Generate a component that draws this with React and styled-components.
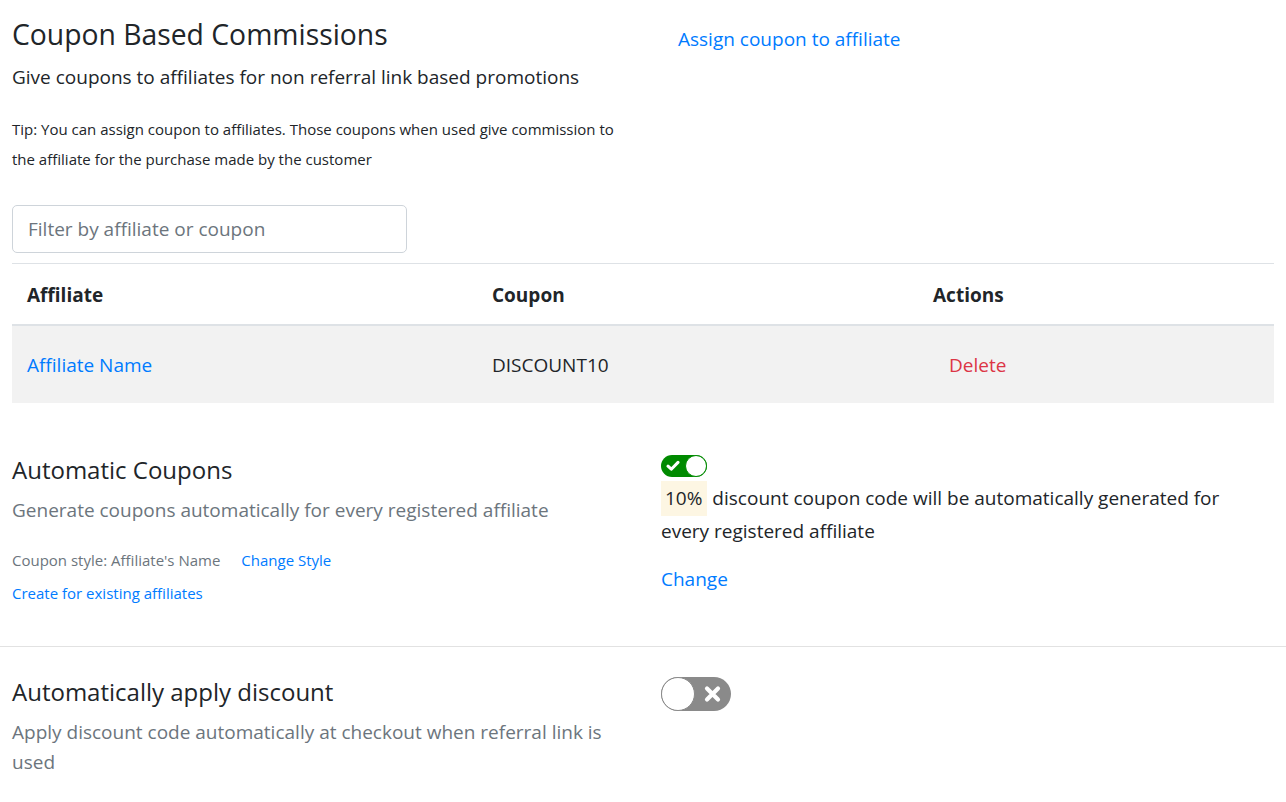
import React from 'react'
import styled, { createGlobalStyle } from 'styled-components'

const GlobalStyle = createGlobalStyle`
  body {
    margin: 0;
    background: #fff;
    color: #212529;
    font-family: "Open Sans", "Noto Sans", sans-serif;
  }
  * { box-sizing: border-box; }
`

const Page = styled.div`
  padding: 17px 12px 40px;
`

const Row = styled.div`
  display: grid;
  grid-template-columns: 619px 1fr;
  column-gap: 30px;
`

const Column = styled.div`
  display: flex;
  flex-direction: column;
  align-items: flex-start;
  padding-right: ${p => (p.right ? 12 : 0)}px;
`

const Title = styled.h3`
  margin: 0;
  font-size: 28.3px;
  font-weight: 400;
  line-height: 34px;
`

const Subtitle = styled.div`
  margin-top: 13px;
  font-size: 19px;
  line-height: 27px;
`

const Tip = styled.p`
  margin: 23px 0 0;
  font-size: 15px;
  line-height: 30px;
`

const Link = styled.a`
  color: #007bff;
  text-decoration: none;
  cursor: pointer;
  font-size: ${p => p.size || 19}px;
  line-height: ${p => p.lh || 27}px;
`

const AssignLink = styled(Link)`
  margin: 9px 0 0 17px;
`

const FilterInput = styled.input`
  margin-top: 31px;
  width: 395px;
  height: 48px;
  padding: 0 15px;
  border: 1px solid #ced4da;
  border-radius: 5px;
  font-family: inherit;
  font-size: 19px;
  color: #495057;
  outline: none;
  &::placeholder { color: #6c757d; }
`

const Table = styled.table`
  width: 100%;
  margin-top: 10px;
  border-collapse: collapse;
  border-top: 1px solid #dee2e6;
  font-size: 19px;
`

const Th = styled.th`
  width: ${p => p.w || 'auto'};
  text-align: left;
  font-weight: 700;
  height: 61px;
  padding: 2px 15px 0;
  border-bottom: 2px solid #dee2e6;
`

const BodyRow = styled.tr`
  background: #f2f2f2;
`

const Td = styled.td`
  height: 78px;
  padding: 2px 15px 0;
`

const DeleteButton = styled.a`
  margin-left: 16px;
  color: #dc3545;
  cursor: pointer;
`

const Section = styled(Row)`
  padding-top: ${p => p.pt}px;
  padding-bottom: ${p => p.pb}px;
`

const SectionTitle = styled.h4`
  margin: 0;
  font-size: 24px;
  font-weight: 400;
  line-height: 30px;
`

const Muted = styled.div`
  margin-top: ${p => p.mt || 0}px;
  color: #6c757d;
  font-size: ${p => p.size || 19}px;
  line-height: ${p => p.lh || 30}px;
`

const StyleLine = styled.div`
  display: flex;
  align-items: center;
  gap: 21px;
  margin-top: 25px;
`

const Divider = styled.hr`
  margin: 0 -12px;
  border: 0;
  border-top: 1px solid #e2e2e2;
`

const Track = styled.div`
  position: relative;
  width: ${p => p.w}px;
  height: ${p => p.h}px;
  border-radius: ${p => p.h / 2}px;
  background: ${p => (p.on ? '#008a00' : '#8a8a8a')};
  flex-shrink: 0;
`

const Knob = styled.div`
  position: absolute;
  top: 0;
  ${p => (p.on ? 'right: 0;' : 'left: 0;')}
  width: ${p => p.h}px;
  height: ${p => p.h}px;
  border-radius: 50%;
  background: #fff;
  border: 1px solid ${p => (p.on ? '#008a00' : '#8a8a8a')};
`

const ToggleIcon = styled.svg`
  position: absolute;
  top: 50%;
  transform: translateY(-50%);
  ${p => (p.on ? 'left: 5px;' : 'right: 10px;')}
`

function Toggle({ on, w, h }) {
  return (
    <Track on={on} w={w} h={h}>
      {on ? (
        <ToggleIcon on width="14" height="12" viewBox="0 0 14 12">
          <path d="M2 6.2 L5.3 9.2 L12 2.4" fill="none" stroke="#fff" strokeWidth="3" strokeLinecap="round" strokeLinejoin="round" />
        </ToggleIcon>
      ) : (
        <ToggleIcon width="17" height="17" viewBox="0 0 17 17">
          <path d="M3 3 L14 14 M14 3 L3 14" fill="none" stroke="#fff" strokeWidth="4.2" strokeLinecap="round" />
        </ToggleIcon>
      )}
      <Knob on={on} h={h} />
    </Track>
  )
}

const Description = styled.div`
  margin-top: 4px;
  font-size: 19px;
  line-height: 30px;
`

const Percent = styled.span`
  display: inline-block;
  background: #fdf6e3;
  padding: 2px 5px 3px 4px;
  line-height: 30px;
`

const ChangeLink = styled(Link)`
  margin-top: 20px;
`

const CreateLink = styled(Link)`
  margin-top: 12px;
`

export default function App() {
  return (
    <Page>
      <GlobalStyle />
      <Row>
        <Column>
          <Title>Coupon Based Commissions</Title>
          <Subtitle>Give coupons to affiliates for non referral link based promotions</Subtitle>
          <Tip>
            Tip: You can assign coupon to affiliates. Those coupons when used give commission to the
            affiliate for the purchase made by the customer
          </Tip>
        </Column>
        <Column right>
          <AssignLink>Assign coupon to affiliate</AssignLink>
        </Column>
      </Row>

      <FilterInput placeholder="Filter by affiliate or coupon" />

      <Table>
        <thead>
          <tr>
            <Th w="465px">Affiliate</Th>
            <Th w="441px">Coupon</Th>
            <Th>Actions</Th>
          </tr>
        </thead>
        <tbody>
          <BodyRow>
            <Td><Link>Affiliate Name</Link></Td>
            <Td>DISCOUNT10</Td>
            <Td><DeleteButton>Delete</DeleteButton></Td>
          </BodyRow>
        </tbody>
      </Table>

      <Section pt={52} pb={42}>
        <Column>
          <SectionTitle>Automatic Coupons</SectionTitle>
          <Muted mt={10}>Generate coupons automatically for every registered affiliate</Muted>
          <StyleLine>
            <Muted size={15} lh={21}>Coupon style: Affiliate's Name</Muted>
            <Link size={15} lh={21}>Change Style</Link>
          </StyleLine>
          <CreateLink size={15} lh={21}>Create for existing affiliates</CreateLink>
        </Column>
        <Column right>
          <Toggle on w={46} h={22} />
          <Description>
            <Percent>10%</Percent> discount coupon code will be automatically generated for every
            registered affiliate
          </Description>
          <ChangeLink>Change</ChangeLink>
        </Column>
      </Section>

      <Divider />

      <Section pt={30} pb={20}>
        <Column>
          <SectionTitle>Automatically apply discount</SectionTitle>
          <Muted mt={10}>Apply discount code automatically at checkout when referral link is used</Muted>
        </Column>
        <Column right>
          <Toggle w={70} h={34} />
        </Column>
      </Section>
    </Page>
  )
}
